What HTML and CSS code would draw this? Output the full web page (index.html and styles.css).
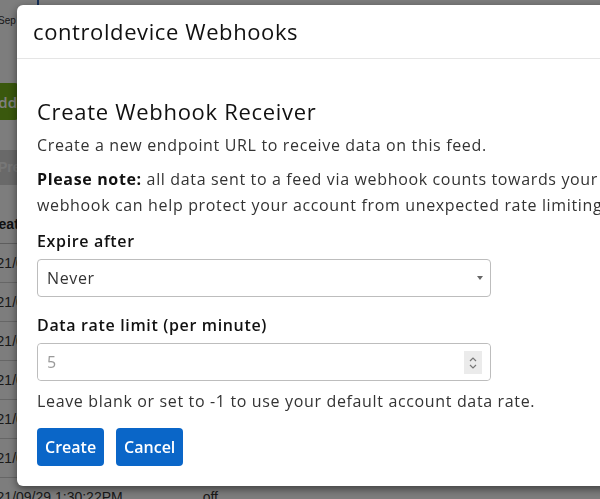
FILE: index.html
```html
<!DOCTYPE html>
<html lang="en">
<head>
    <meta charset="UTF-8" />
    <meta name="viewport" content="width=device-width, initial-scale=1.0" />
    <title>controldevice Webhooks</title>
    <link rel="stylesheet" href="styles.css">
</head>
<body>
    <div class="page">
        <div class="crumbs">
            <span class="date">Sep</span>
            <span class="rule"></span>
        </div>
        <button type="button" class="add">Add</button>
        <div class="preview">Preview</div>
        <table class="data">
            <tr><th>Created at</th><th>Value</th></tr>
            <tr><td>2021/09/29 1:36:02PM</td><td>on</td></tr>
            <tr><td>2021/09/29 1:35:12PM</td><td>off</td></tr>
            <tr><td>2021/09/29 1:34:40PM</td><td>on</td></tr>
            <tr><td>2021/09/29 1:33:51PM</td><td>off</td></tr>
            <tr><td>2021/09/29 1:32:17PM</td><td>on</td></tr>
            <tr><td>2021/09/29 1:31:05PM</td><td>on</td></tr>
            <tr><td>2021/09/29 1:30:22PM</td><td>off</td></tr>
        </table>
    </div>

    <div class="backdrop"></div>

    <div class="modal">
        <div class="modal-head">
            <h3>controldevice Webhooks</h3>
        </div>
        <form class="modal-body">
            <h2>Create Webhook Receiver</h2>
            <p>Create a new endpoint URL to receive data on this feed.</p>
            <p class="note"><b>Please note:</b> all data sent to a feed via webhook counts towards your account's data rate limit. Setting a limit on this<br>webhook can help protect your account from unexpected rate limiting.</p>

            <label for="expire">Expire after</label>
            <div class="select" id="expire">
                <span>Never</span>
                <i class="caret"></i>
            </div>

            <label for="rate" class="second">Data rate limit (per minute)</label>
            <div class="number">
                <input type="text" id="rate" placeholder="5" />
                <span class="spin">
                    <svg width="10" height="16" viewBox="0 0 10 16">
                        <path d="M2 6 L5 3 L8 6" fill="none" stroke="#777" stroke-width="1.2"/>
                        <path d="M2 10 L5 13 L8 10" fill="none" stroke="#777" stroke-width="1.2"/>
                    </svg>
                </span>
            </div>
            <p class="help">Leave blank or set to -1 to use your default account data rate.</p>

            <div class="actions">
                <button type="submit" class="btn">Create</button>
                <button type="button" class="btn">Cancel</button>
            </div>
        </form>
    </div>
</body>
</html>
```

FILE: styles.css
```css
body{
    margin: 0;
    height: 499px;
    overflow: hidden;
    font-family: "Open Sans", "Liberation Sans", sans-serif;
    background-color: #fafafa;
}
.page{
    margin-left: -26px;
    font-family: "Liberation Sans", Arial, sans-serif;
    color: #333;
}
.crumbs{
    position: relative;
    height: 83px;
}
.date{
    display: block;
    padding: 15px 0 0 24px;
    font-size: 10px;
    color: #333;
}
.rule{
    position: absolute;
    left: 63px;
    top: 0;
    width: 2px;
    height: 8px;
    background-color: #2a5fb0;
}
.add{
    display: block;
    width: 44px;
    height: 37px;
    border: none;
    border-radius: 3px;
    background-color: #74b01a;
    color: #fff;
    font-family: "Open Sans", sans-serif;
    font-size: 15px;
    font-weight: 600;
    text-align: right;
    padding: 0 1px 0 0;
}
.preview{
    margin-top: 30px;
    height: 35px;
    line-height: 35px;
    padding-left: 24px;
    background-color: #d2d2d2;
    color: #eee;
    font-size: 14px;
    font-weight: bold;
}
.data{
    margin-top: 20px;
    border-collapse: collapse;
    font-size: 14px;
}
.data th{
    text-align: left;
    height: 38px;
    padding: 0 0 0 9px;
    border-bottom: 1px solid #bbb;
    color: #222;
}
.data td{
    height: 38px;
    padding: 0 0 0 7px;
    border-bottom: 1px solid #ccc;
}
.data td + td, .data th + th{
    padding-left: 80px;
}
.backdrop{
    position: fixed;
    inset: 0;
    background-color: rgba(0,0,0,0.5);
}
.modal{
    position: fixed;
    left: 17px;
    top: 5px;
    width: 800px;
    background-color: #fff;
    border-radius: 6px;
    box-shadow: 0 3px 9px rgba(0,0,0,0.5);
}
.modal-head{
    padding: 15px 16px;
    border-bottom: 1px solid #e5e5e5;
}
.modal-head h3{
    margin: 0;
    font-size: 22px;
    line-height: 23px;
    font-weight: 500;
    letter-spacing: 0.6px;
    color: #111;
}
.modal-body{
    padding: 39px 20px 20px;
    color: #333;
    font-size: 16px;
    line-height: 26px;
    letter-spacing: 0.65px;
}
.modal-body h2{
    margin: 0 0 8px;
    font-size: 22px;
    line-height: 26px;
    font-weight: 500;
    letter-spacing: 0.7px;
    color: #111;
}
.modal-body p{
    margin: 0 0 8px;
}
.note{
    white-space: nowrap;
}
.modal-body .note{
    margin-bottom: 10px;
}
.note b{
    color: #111;
}
label{
    display: block;
    margin-bottom: 5px;
    font-weight: 600;
    color: #111;
}
.second{
    margin-top: 15px;
}
.select, .number{
    position: relative;
    box-sizing: border-box;
    width: 454px;
    height: 38px;
    border: 1px solid #bdbdbd;
    border-radius: 4px;
}
.select span{
    display: block;
    padding-left: 9px;
    line-height: 36px;
    color: #333;
}
.caret{
    position: absolute;
    right: 7px;
    top: 16px;
    border-left: 3px solid transparent;
    border-right: 3px solid transparent;
    border-top: 4px solid #666;
}
.number input{
    box-sizing: border-box;
    width: 100%;
    height: 36px;
    border: none;
    border-radius: 4px;
    padding: 0 0 0 9px;
    font-family: inherit;
    font-size: 16px;
    outline: none;
}
.number input::placeholder{
    color: #999;
}
.spin{
    position: absolute;
    right: 8px;
    top: 7px;
    width: 18px;
    height: 23px;
    display: flex;
    align-items: center;
    justify-content: center;
    background-color: #ebebeb;
}
.modal-body .help{
    margin: 7px 0 0;
}
.actions{
    display: flex;
    gap: 12px;
    margin-top: 14px;
}
.btn{
    height: 38px;
    padding: 0 8px;
    border: none;
    border-radius: 4px;
    background-color: #0a66c8;
    color: #fff;
    font-family: inherit;
    font-size: 16px;
    font-weight: 600;
}
```
